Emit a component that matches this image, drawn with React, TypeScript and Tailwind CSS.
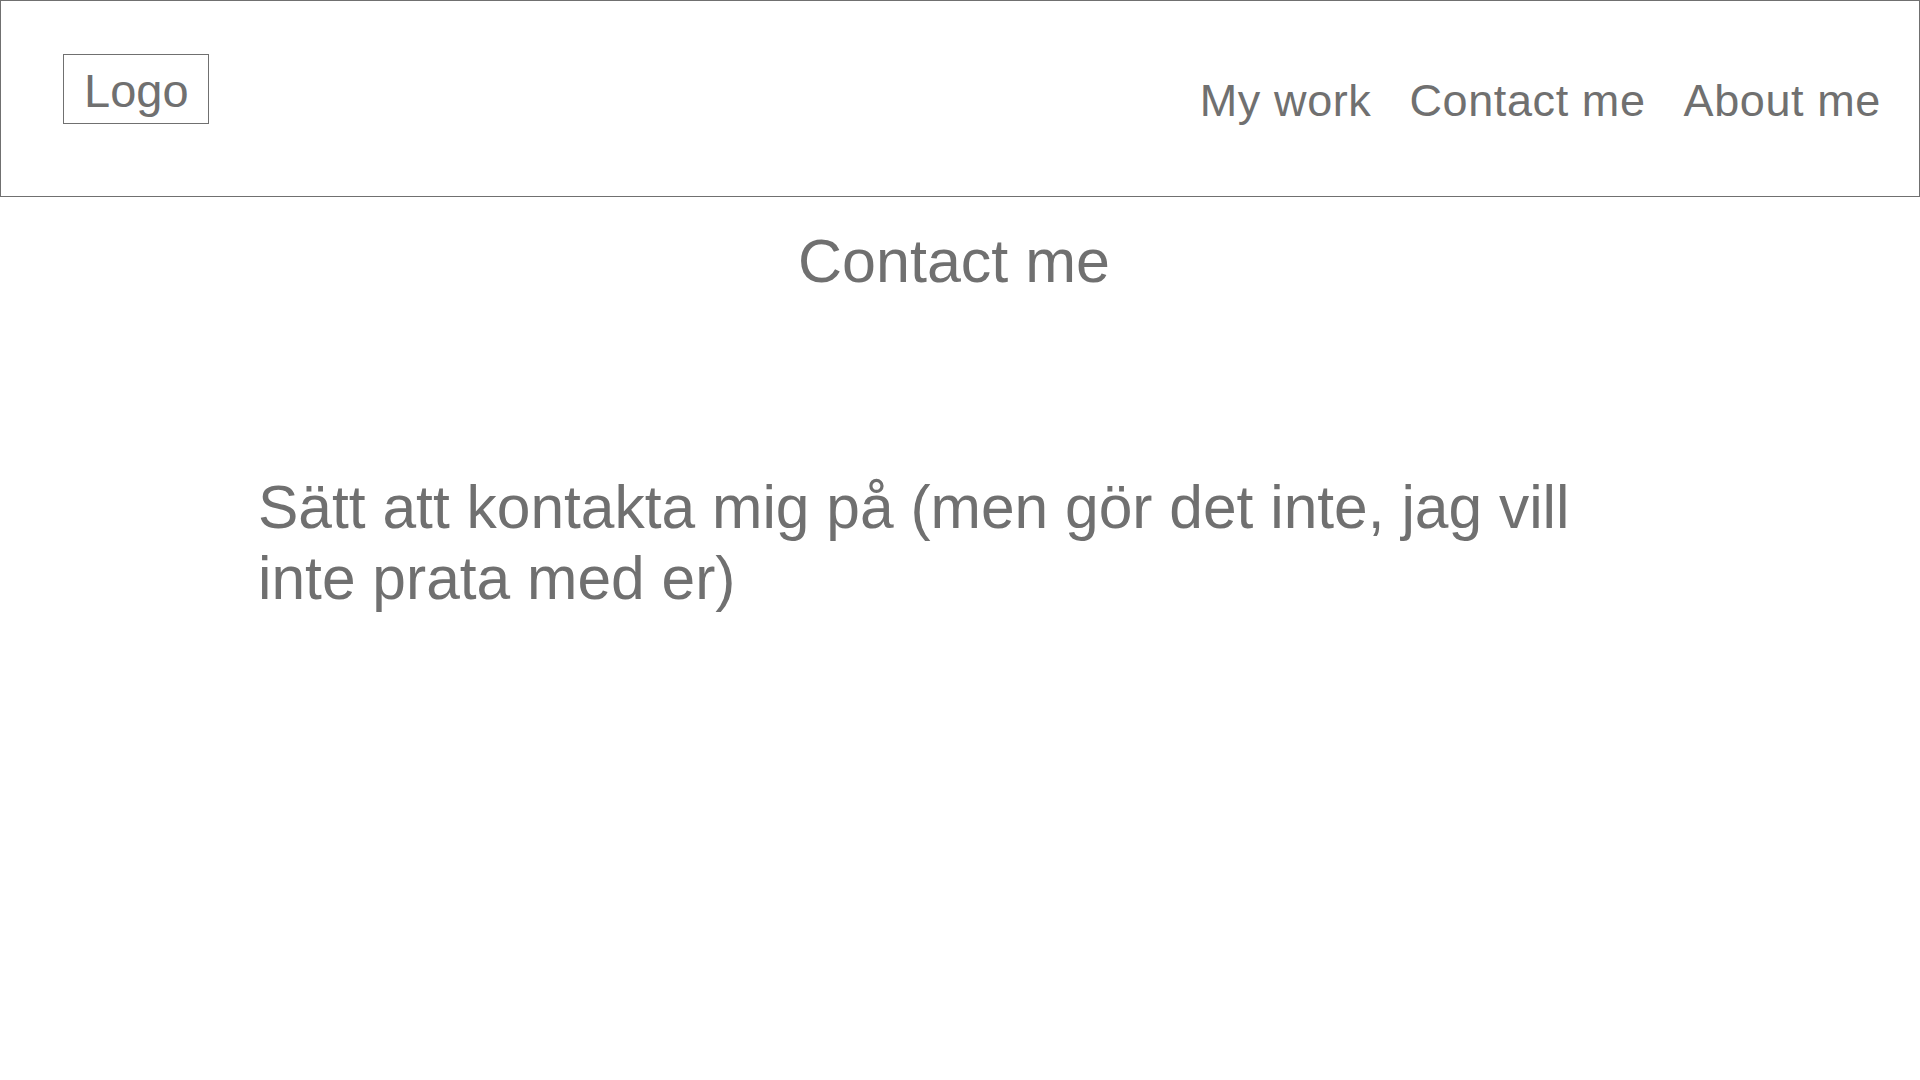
import React from "react";

export default function App() {
  return (
    <div
      className="w-[1920px] h-[1080px] bg-white text-[#707070] overflow-hidden"
      style={{ fontFamily: '"Liberation Sans", Arial, Helvetica, sans-serif' }}
    >
      <header className="h-[197px] border border-[#707070] flex justify-between items-start">
        <div className="ml-[62px] mt-[53px] w-[146px] h-[70px] border border-[#707070] pl-[20px] pt-[12px]">
          <span className="block text-[47px] leading-none">Logo</span>
        </div>
        <nav className="mt-[77px] mr-[38px] flex gap-[38px] text-[45px] leading-none tracking-[0.6px]">
          <a>My work</a>
          <a>Contact me</a>
          <a>About me</a>
        </nav>
      </header>
      <main>
        <h1 className="mt-[34px] text-center text-[61px] leading-none pr-[12px]">
          Contact me
        </h1>
        <p className="mt-[180px] pl-[258px] pr-[258px] text-[60.5px] leading-[71px]">
          Sätt att kontakta mig på (men gör det inte, jag vill inte prata med er)
        </p>
      </main>
    </div>
  );
}
